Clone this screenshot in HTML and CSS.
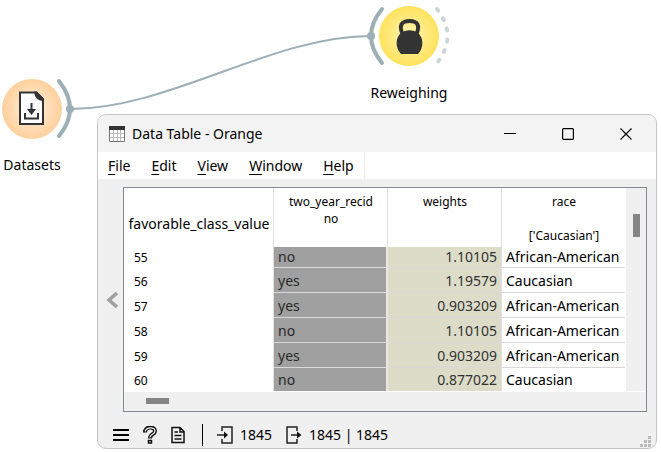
FILE: index.html
```html
<!DOCTYPE html>
<html lang="en">
<head>
<meta charset="utf-8">
<title>Data Table - Orange</title>
<link rel="stylesheet" href="styles.css">
</head>
<body>
<main class="canvas">
  <svg class="links" width="661" height="170" viewBox="0 0 661 170" aria-hidden="true">
    <defs>
      <radialGradient id="orange"><stop offset="0" stop-color="#fff0df"/><stop offset="1" stop-color="#ffd09c"/></radialGradient>
      <radialGradient id="yellow"><stop offset="0" stop-color="#fff5b8"/><stop offset="1" stop-color="#ffe25c"/></radialGradient>
    </defs>
    <path class="link" d="M70 109C170 109 271 36 371 36"/>
    <circle cx="32" cy="109" r="30" fill="url(#orange)"/>
    <path class="anchor" d="M59 81Q81 109 59 136"/>
    <circle class="dot" cx="70" cy="109" r="4"/>
    <path d="M20 92.500H36L43 99V124H20Z" fill="#fff" stroke="#333" stroke-width="2"/>
    <path d="M35 91.500H37L44 99V101Q35 101 34 92Z" fill="#333"/>
    <path d="M25 113V118.500H38V113" fill="none" stroke="#333" stroke-width="2"/>
    <path d="M30.500 103H32.500V109H36L31.500 115L27 109H30.500Z" fill="#333"/>
    <circle cx="409" cy="36" r="30" fill="url(#yellow)"/>
    <path class="anchor" d="M382 9Q360 36 382 63"/>
    <circle class="dot" cx="371" cy="36" r="4"/>
    <path class="anchor anchor-open" d="M437 9Q458 36 437 63"/>
    <path d="M402.500 34C399 26 401 21 409.500 21C418 21 420 26 416.500 34" fill="none" stroke="#333" stroke-width="4"/>
    <path d="M402 32Q409.500 28.500 417 32C424 37 424 48 418 54H401C395 48 395 37 402 32Z" fill="#333"/>
  </svg>
  <span class="node-label label-datasets">Datasets</span>
  <span class="node-label label-reweighing">Reweighing</span>

  <section class="window" aria-label="Data Table - Orange">
    <header class="titlebar">
      <svg width="16" height="16" viewBox="0 0 16 16" aria-hidden="true">
        <path d="M.5 .5H15.500V15.500H.5Z" fill="#fff" stroke="#777"/>
        <path d="M4.500 4V15M8.500 4V15M11.500 4V15M1 7.500H15M1 11.500H15" stroke="#bbb"/>
        <path d="M0 0H16V4H0Z" fill="#333"/>
      </svg>
      <h1 class="title">Data Table - Orange</h1>
      <div class="controls">
        <button aria-label="Minimize"><svg width="12" height="12" viewBox="0 0 12 12"><path d="M0 5.500H12"/></svg></button>
        <button aria-label="Maximize"><svg width="12" height="12" viewBox="0 0 12 12"><rect x=".6" y=".6" width="10.800" height="10.800" rx="1"/></svg></button>
        <button aria-label="Close"><svg width="12" height="12" viewBox="0 0 12 12"><path d="M.5 .5L11.500 11.500M11.500 .5L.5 11.500"/></svg></button>
      </div>
    </header>
    <nav class="menubar">
      <button><u>F</u>ile</button>
      <button><u>E</u>dit</button>
      <button><u>V</u>iew</button>
      <button><u>W</u>indow</button>
      <button><u>H</u>elp</button>
    </nav>
    <div class="content">
      <button class="collapse" aria-label="Collapse panel"><svg width="12" height="16" viewBox="0 0 12 16"><path d="M11 1L3 8L11 15" fill="none" stroke="#a0a0a0" stroke-width="3.500"/></svg></button>
      <div class="frame">
        <div class="view">
          <table class="grid">
            <colgroup><col class="c-index"><col class="c-mid"><col class="c-mid"><col></colgroup>
            <thead>
              <tr><th class="corner">favorable_class_value</th><th>two_year_recid<br>no</th><th>weights</th><th>race<br><br>['Caucasian']</th></tr>
            </thead>
            <tbody>
              <tr><th>55</th><td class="cls">no</td><td class="num">1.10105</td><td>African-American</td></tr>
              <tr><th>56</th><td class="cls">yes</td><td class="num">1.19579</td><td>Caucasian</td></tr>
              <tr><th>57</th><td class="cls">yes</td><td class="num">0.903209</td><td>African-American</td></tr>
              <tr><th>58</th><td class="cls">no</td><td class="num">1.10105</td><td>African-American</td></tr>
              <tr><th>59</th><td class="cls">yes</td><td class="num">0.903209</td><td>African-American</td></tr>
              <tr><th>60</th><td class="cls">no</td><td class="num">0.877022</td><td>Caucasian</td></tr>
            </tbody>
          </table>
          <div class="vscroll"><div class="vthumb"></div></div>
        </div>
        <div class="hscroll"><div class="hthumb"></div></div>
      </div>
    </div>
    <footer class="status">
      <button aria-label="Menu"><svg width="16" height="18" viewBox="0 0 16 18"><path d="M0 4H16M0 9H16M0 14H16" stroke="#000" stroke-width="2"/></svg></button>
      <button aria-label="Help"><svg width="14" height="18" viewBox="0 0 14 18"><path d="M2 6.500C2 0 12 0 12 5C12 8.500 7 8 7 12.500" fill="none" stroke="#111" stroke-width="4"/><path d="M2.200 5.500C3 1 12 .5 12 5C12 8.500 7 8 7 11.500" fill="none" stroke="#f0f0f0" stroke-width="1.300"/><rect x="5.500" y="14.500" width="3" height="2.500" fill="#f0f0f0" stroke="#111" stroke-width="1.500"/></svg></button>
      <button aria-label="Report"><svg width="14" height="18" viewBox="0 0 14 18"><path d="M1 1.500H9L13 5.500V16.500H1ZM9 1.500V6H13M3.500 6H7M3.500 9.500H10.500M3.500 13H10.500" fill="none" stroke="#111" stroke-width="1.500"/></svg></button>
      <span class="divider"></span>
      <button class="count"><svg width="16" height="18" viewBox="0 0 16 18"><path d="M5 5V1H15V17H5V13M0 9H9" fill="none" stroke="#222" stroke-width="1.500"/><path d="M7 5.500L11 9L7 12.500Z" fill="#111"/></svg>1845</button>
      <button class="count"><svg width="16" height="18" viewBox="0 0 16 18"><path d="M11 5V1H1V17H11V13M5 9H13" fill="none" stroke="#222" stroke-width="1.500"/><path d="M11 5.500L15.500 9L11 12.500Z" fill="#111"/></svg>1845 | 1845</button>
      <svg class="grip" width="12" height="12" viewBox="0 0 12 12" aria-hidden="true"><path d="M8 0h3v3H8zM4 4h3v3H4zM8 4h3v3H8zM0 8h3v3H0zM4 8h3v3H4zM8 8h3v3H8z" fill="#bbb"/></svg>
    </footer>
  </section>
</main>
</body>
</html>
```
FILE: styles.css
```css
* { box-sizing: border-box; }
body {
  margin: 0;
  background: #fff;
  color: #000;
  font: 14px/20px "Noto Sans", "Open Sans", sans-serif;
}
button {
  padding: 0;
  border: 0;
  background: none;
  color: inherit;
  font: inherit;
}
svg { display: block; flex: none; }
.canvas { position: relative; min-height: 100vh; overflow: hidden; }
.links { position: absolute; left: 0; top: 0; }
.link { fill: none; stroke: #9caeb6; stroke-width: 2; }
.anchor { fill: none; stroke: #9caeb6; stroke-width: 4; stroke-linecap: round; }
.anchor-open { stroke: #ccd5d9; stroke-dasharray: 2 9; }
.dot { fill: #9caeb6; }
.node-label { position: absolute; transform: translateX(-50%); }
.label-datasets { left: 32px; top: 155px; }
.label-reweighing { left: 409px; top: 83px; }

.window {
  position: absolute;
  left: 97px;
  right: 4px;
  top: 114px;
  overflow: hidden;
  border: 1px solid #c4c4c4;
  border-radius: 9px;
  background: #f0f0f0;
}
.titlebar {
  display: flex;
  align-items: center;
  gap: 7px;
  height: 37px;
  padding-left: 11px;
  background: #f3f3f3;
}
.title { margin: 0; font-size: 14px; font-weight: 400; }
.controls { display: flex; margin-left: auto; }
.controls button { display: grid; place-items: center; width: 58px; height: 36px; }
.controls svg { fill: none; stroke: #000; stroke-width: 1.200; }
.controls { padding-right: 1px; }

.menubar { display: flex; gap: 1px; height: 27px; background: #fff; }
.menubar button { padding: 0 10px; }
.menubar button:last-child { border-right: 1px solid #eee; }
u { text-underline-offset: 3px; }

.content { display: flex; padding: 8px 9px 0 8px; }
.collapse { width: 17px; }
.frame { flex: 1; border: 1px solid #828790; }
.view { display: flex; background: #fff; }
.grid { flex: 1; table-layout: fixed; width: 100%; border-collapse: separate; border-spacing: 0; margin-right: 1px; }
.c-index { width: 150px; }
.c-mid { width: 114px; }
.grid th { padding: 0; font-weight: 400; font-size: 12px; }
.grid thead th { height: 59px; padding: 5px 0 0 1px; line-height: 17px; vertical-align: top; border-right: 1px solid #e0e0e0; }
.grid thead th:last-child { border-right: 0; }
.grid thead .corner { font-size: 14px; vertical-align: middle; padding-top: 12px; }
.grid tbody th { padding-left: 10px; text-align: left; border-right: 1px solid #e0e0e0; }
.grid td { height: 25px; padding: 3px 4px 1px; border-bottom: 1px solid #d8d8d8; white-space: nowrap; }
.grid tbody th { padding-top: 3px; }
.grid tbody tr:first-child > * { height: 21px; padding-top: 0; padding-bottom: 0; }
.grid tbody tr:last-child > * { height: 23px; padding-top: 2px; border-bottom: 0; }
.grid .cls { background: #a0a0a0; color: #2a2a2a; border-right: 2px solid #e8e8e8; }
.grid .num { background: #dcdcc8; color: #333; text-align: right; border-right: 1px solid #e0e0e0; }
.vscroll { width: 20px; padding: 26px 6px 0 7px; background: #f0f0f0; }
.vthumb { height: 23px; background: #858585; }
.hscroll { height: 20px; padding: 6px 0 0 22px; background: #f0f0f0; border-top: 1px solid #fff; }
.hthumb { width: 23px; height: 6px; background: #858585; }

.status { display: flex; align-items: center; gap: 14px; height: 36px; padding: 10px 4px 0 15px; }
.divider { width: 1px; height: 22px; margin-left: 3px; background: #000; }
.count { display: flex; align-items: center; gap: 7px; }
.grip { align-self: flex-end; margin-left: auto; }
```
